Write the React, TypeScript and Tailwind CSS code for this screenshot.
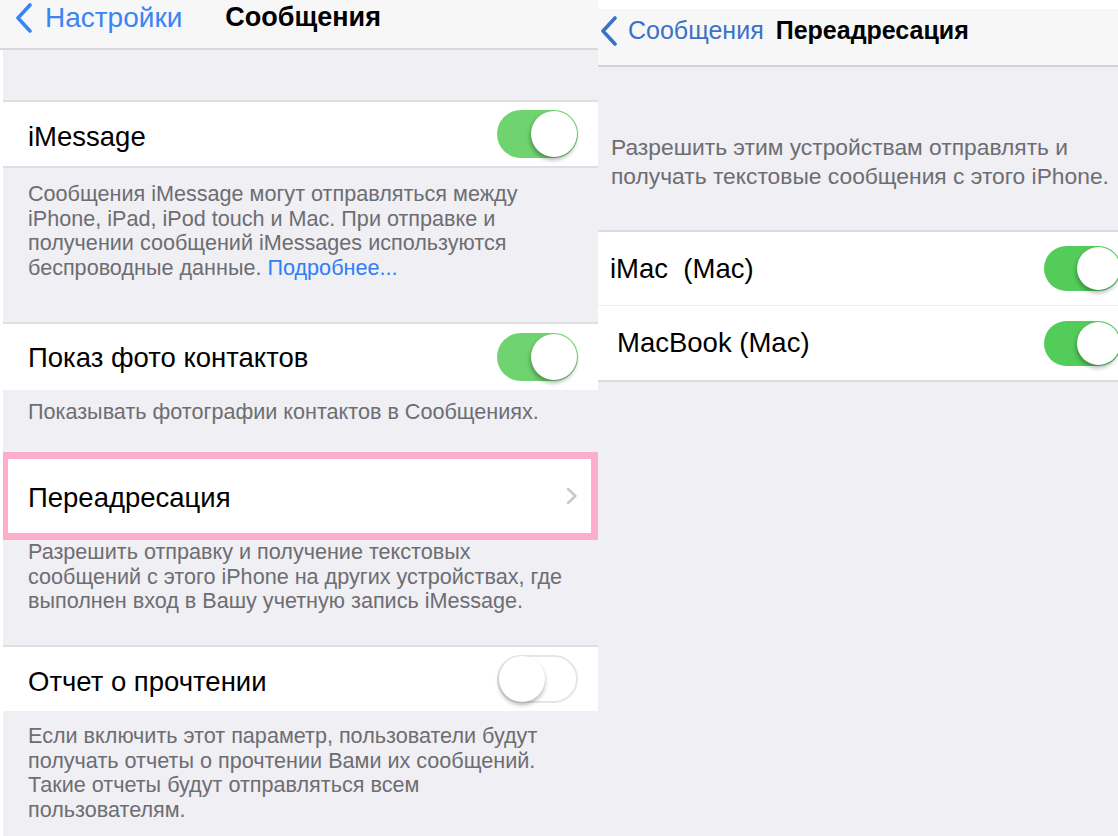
import React from "react";

const font = { fontFamily: '"Liberation Sans", Arial, sans-serif' };

function Toggle({ on, variant = "left" }: { on: boolean; variant?: "left" | "right" }) {
  if (!on) {
    return (
      <div className="relative w-[81px] h-[48px] rounded-full bg-white border-2 border-[#e6e6ea] shrink-0">
        <div className="absolute left-0 top-[-1px] w-[46px] h-[46px] rounded-full bg-white shadow-[0_3px_4px_rgba(0,0,0,0.28)]" />
      </div>
    );
  }
  const green = variant === "left" ? "bg-[#6fd36f]" : "bg-[#53cc5a]";
  return (
    <div className={`relative ${variant === "left" ? "w-[81px] h-[48px]" : "w-[77px] h-[45px]"} rounded-full ${green} shrink-0`}>
      <div
        className={`absolute right-[1px] top-[1px] ${variant === "left" ? "w-[46px] h-[46px]" : "w-[43px] h-[43px]"} rounded-full bg-white shadow-[-1px_3px_4px_rgba(0,0,0,0.3)]`}
      />
    </div>
  );
}

function BackChevron({ color, h = 30 }: { color: string; h?: number }) {
  return (
    <svg width="18" height={h} viewBox="0 0 18 30" fill="none">
      <path d="M15 2 L3 15 L15 28" stroke={color} strokeWidth="3.6" strokeLinecap="round" strokeLinejoin="round" />
    </svg>
  );
}

export default function App() {
  return (
    <div className="w-[1118px] h-[836px] flex overflow-hidden bg-white" style={font}>
      {/* LEFT PANEL */}
      <div className="w-[598px] h-full flex flex-col bg-[#efeff4] pl-[3px] relative">
        <div className="absolute left-0 top-[50px] bottom-0 w-[3px] bg-white" />
        {/* nav */}
        <div className="h-[50px] -ml-[3px] bg-[#f7f7f8] border-b-2 border-[#d8d8dc] flex items-center relative">
          <div className="ml-[15px] mt-[-13px]">
            <BackChevron color="#3a84f3" />
          </div>
          <span className="ml-[12px] mt-[-13px] text-[28px] text-[#3a84f3]">Настройки</span>
          <span className="ml-[43px] mt-[-13px] text-[27px] font-bold text-black">Сообщения</span>
        </div>
        <div className="h-[50px]" />
        {/* iMessage */}
        <div className="h-[68px] bg-white border-y-2 border-[#dedee3] flex items-center justify-between pl-[25px] pr-[20px]">
          <span className="text-[27.5px] text-black mt-[6px]">iMessage</span>
          <Toggle on />
        </div>
        <div className="h-[154px] pt-[14px] pl-[25px] text-[21.6px] leading-[24.5px] text-[#6d6d72]">
          Сообщения iMessage могут отправляться между
          <br />
          iPhone, iPad, iPod touch и Mac. При отправке и
          <br />
          получении сообщений iMessages используются
          <br />
          беспроводные данные. <span className="text-[#2e7ff6]">Подробнее...</span>
        </div>
        {/* Показ фото */}
        <div className="h-[68px] bg-white border-t-2 border-[#dedee3] flex items-center justify-between pl-[25px] pr-[20px]">
          <span className="text-[27.5px] text-black mt-[1px]">Показ фото контактов</span>
          <Toggle on />
        </div>
        <div className="h-[62px] pt-[10px] pl-[25px] text-[21.6px] leading-[24.5px] text-[#6d6d72]">
          Показывать фотографии контактов в Сообщениях.
        </div>
        {/* Переадресация (highlighted) */}
        <div className="h-[88px] -ml-[2px] bg-white border-[7px] border-[#fdaecb] flex items-center justify-between pl-[20px] pr-[13px]">
          <span className="text-[27.5px] text-black mt-[3px]">Переадресация</span>
          <svg width="12" height="18" viewBox="0 0 12 18" fill="none">
            <path d="M2 2 L9.5 9 L2 16" stroke="#c7c7cc" strokeWidth="2.4" strokeLinecap="round" strokeLinejoin="round" />
          </svg>
        </div>
        <div className="h-[105px] pt-0 pl-[25px] text-[21.6px] leading-[24.5px] text-[#6d6d72]">
          Разрешить отправку и получение текстовых
          <br />
          сообщений с этого iPhone на других устройствах, где
          <br />
          выполнен вход в Вашу учетную запись iMessage.
        </div>
        {/* Отчет о прочтении */}
        <div className="h-[66px] bg-white border-t-2 border-[#dedee3] flex items-center justify-between pl-[25px] pr-[20px]">
          <span className="text-[27.5px] text-black mt-[6px]">Отчет о прочтении</span>
          <Toggle on={false} />
        </div>
        <div className="pt-[13px] pl-[25px] text-[21.6px] leading-[24.5px] text-[#6d6d72]">
          Если включить этот параметр, пользователи будут
          <br />
          получать отчеты о прочтении Вами их сообщений.
          <br />
          Такие отчеты будут отправляться всем
          <br />
          пользователям.
        </div>
      </div>

      {/* RIGHT PANEL */}
      <div className="flex-1 h-full flex flex-col bg-[#efeff4]">
        <div className="h-[9px] bg-white" />
        <div className="h-[58px] bg-[#f7f7f8] border-b-2 border-[#d2d2d6] flex items-center">
          <div className="ml-[2px] mt-[-12px]">
            <BackChevron color="#3a72c8" />
          </div>
          <span className="ml-[10px] mt-[-12px] text-[25px] text-[#3a72c8]">Сообщения</span>
          <span className="ml-[12px] mt-[-12px] text-[25px] font-bold text-black">Переадресация</span>
        </div>
        <div className="h-[163px] pt-[66px] pl-[13px] text-[22.8px] leading-[29px] text-[#6d6d72]">
          Разрешить этим устройствам отправлять и
          <br />
          получать текстовые сообщения с этого iPhone.
        </div>
        <div className="bg-white border-y-2 border-[#dcdce0] flex flex-col">
          <div className="h-[74px] flex items-center justify-between pl-[12px] -mr-[3px] border-b border-[#ececf0]">
            <span className="text-[27.5px] text-black">iMac&nbsp; (Mac)</span>
            <Toggle on variant="right" />
          </div>
          <div className="h-[74px] flex items-center justify-between pl-[19px] -mr-[3px]">
            <span className="text-[27.5px] text-black">MacBook (Mac)</span>
            <Toggle on variant="right" />
          </div>
        </div>
      </div>
    </div>
  );
}
